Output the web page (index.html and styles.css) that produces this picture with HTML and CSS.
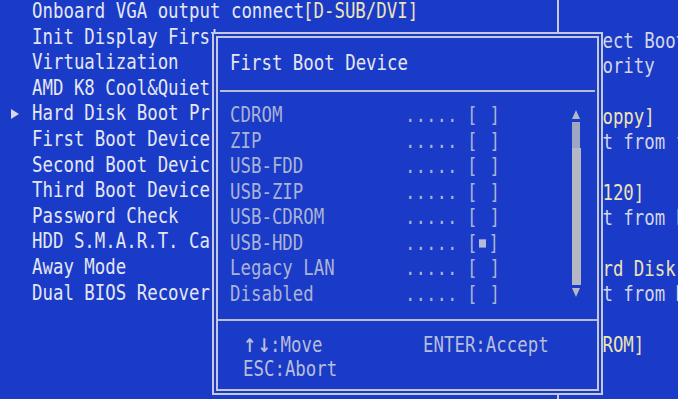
FILE: index.html
```html
<!DOCTYPE html>
<html lang="en">
<head>
<meta charset="utf-8">
<title>BIOS - First Boot Device</title>
<link rel="stylesheet" href="styles.css">
</head>
<body>
<div class="screen">
  <div class="settings">
    <div class="row"><span class="gutter"></span><span class="label">Onboard VGA output connect</span><span class="value hl">[D-SUB/DVI]</span></div>
    <div class="row"><span class="gutter"></span><span class="label">Init Display First</span></div>
    <div class="row"><span class="gutter"></span><span class="label">Virtualization</span></div>
    <div class="row"><span class="gutter"></span><span class="label">AMD K8 Cool&amp;Quiet</span></div>
    <div class="row"><span class="gutter"><span class="marker"></span></span><span class="label">Hard Disk Boot Pr</span></div>
    <div class="row"><span class="gutter"></span><span class="label">First Boot Device</span></div>
    <div class="row"><span class="gutter"></span><span class="label">Second Boot Devic</span></div>
    <div class="row"><span class="gutter"></span><span class="label">Third Boot Device</span></div>
    <div class="row"><span class="gutter"></span><span class="label">Password Check</span></div>
    <div class="row"><span class="gutter"></span><span class="label">HDD S.M.A.R.T. Ca</span></div>
    <div class="row"><span class="gutter"></span><span class="label">Away Mode</span></div>
    <div class="row"><span class="gutter"></span><span class="label">Dual BIOS Recover</span></div>
  </div>
  <div class="help">
    <div class="hrow">Select Boot Device</div>
    <div class="hrow">Priority</div>
    <div class="hrow"></div>
    <div class="hrow hl">[Floppy]</div>
    <div class="hrow">Boot from floppy</div>
    <div class="hrow"></div>
    <div class="hrow hl">[LS120]</div>
    <div class="hrow">Boot from LS120</div>
    <div class="hrow"></div>
    <div class="hrow hl">[Hard Disk]</div>
    <div class="hrow">Boot from HDD</div>
    <div class="hrow"></div>
    <div class="hrow hl">[CDROM]</div>
  </div>

  <div class="dialog">
    <div class="d-title">First Boot Device</div>
    <div class="d-sep"></div>
    <div class="d-body">
      <ul class="d-list">
        <li><span class="name">CDROM</span><span class="dots">.....</span><span class="box">[<span class="mark"></span>]</span></li>
        <li><span class="name">ZIP</span><span class="dots">.....</span><span class="box">[<span class="mark"></span>]</span></li>
        <li><span class="name">USB-FDD</span><span class="dots">.....</span><span class="box">[<span class="mark"></span>]</span></li>
        <li><span class="name">USB-ZIP</span><span class="dots">.....</span><span class="box">[<span class="mark"></span>]</span></li>
        <li><span class="name">USB-CDROM</span><span class="dots">.....</span><span class="box">[<span class="mark"></span>]</span></li>
        <li><span class="name">USB-HDD</span><span class="dots">.....</span><span class="box">[<span class="mark on"></span>]</span></li>
        <li><span class="name">Legacy LAN</span><span class="dots">.....</span><span class="box">[<span class="mark"></span>]</span></li>
        <li><span class="name">Disabled</span><span class="dots">.....</span><span class="box">[<span class="mark"></span>]</span></li>
      </ul>
      <div class="scroll">
        <span class="arrow up"></span>
        <span class="track"></span>
        <span class="thumb"></span>
        <span class="arrow down"></span>
      </div>
    </div>
    <div class="d-sep foot-sep"></div>
    <div class="d-foot">
      <span class="key"><span class="arrows">↑↓</span>:Move</span><span class="key">ENTER:Accept</span>
      <span class="key">ESC:Abort</span><span></span>
    </div>
  </div>
</div>
</body>
</html>
```

FILE: styles.css
```css
html, body {
  margin: 0;
  padding: 0;
}
body {
  width: 678px;
  height: 399px;
  overflow: hidden;
  background: #1a3ac8;
  font-family: "DejaVu Sans Mono", "Liberation Mono", monospace;
  font-size: 17.4px;
  color: #e4e7f2;
}
.screen {
  position: relative;
  width: 678px;
  height: 399px;
  overflow: hidden;
  display: grid;
  grid-template-columns: 557px 1fr;
  background: #1a3ac8;
}
.settings {
  margin-top: -1px;
  padding-left: 10px;
  white-space: nowrap;
  overflow: hidden;
}
.row {
  display: flex;
  height: 25.6px;
  line-height: 25.6px;
}
.label,
.value,
.hrow,
.d-title,
.d-list li,
.key {
  transform: scaleY(1.18);
}
.gutter {
  width: 22px;
  flex: none;
  display: flex;
  align-items: center;
}
.marker {
  width: 0;
  height: 0;
  border-top: 5px solid transparent;
  border-bottom: 5px solid transparent;
  border-left: 8px solid #d4d8e6;
  margin-left: 1px;
}
.label {
  width: 271px;
  flex: none;
  overflow: hidden;
}
.value {
  flex: none;
}
.hl {
  color: #ece3b6;
}
.help {
  border-left: 2px solid #c6cadc;
  padding-top: 28.5px;
  padding-left: 12px;
  white-space: nowrap;
  overflow: hidden;
}
.hrow {
  height: 25.4px;
  line-height: 25.4px;
  color: #d2d6e6;
}
.hrow.hl {
  color: #ece3b6;
}

/* Dialog overlay */
.dialog {
  position: absolute;
  left: 212px;
  top: 32px;
  width: 391px;
  height: 363px;
  box-sizing: border-box;
  border: 6px double #c4c8da;
  background: #1a3ac8;
  display: flex;
  flex-direction: column;
}
.d-title {
  height: 52px;
  line-height: 50px;
  padding-left: 12px;
  color: #e4e7f2;
}
.d-sep {
  height: 2px;
  margin: 0 2px;
  background: #b8bed6;
  flex: none;
}
.d-body {
  display: flex;
  padding-top: 11px;
}
.d-list {
  list-style: none;
  margin: 0;
  padding: 0 0 0 12px;
  flex: 1;
  color: #a9b3d6;
}
.d-list li {
  display: flex;
  height: 25.5px;
  line-height: 25.5px;
  white-space: nowrap;
}
.name {
  width: 175px;
  flex: none;
}
.dots {
  width: 62px;
  flex: none;
}
.box {
  display: flex;
  align-items: center;
}
.mark {
  display: inline-block;
  width: 10px;
  height: 7px;
  margin: 0 1px;
  box-sizing: border-box;
}
.mark.on {
  background: #b4bcd8;
  width: 7px;
  margin: 0 2px 0 2px;
}
.scroll {
  width: 10px;
  margin-right: 16px;
  display: flex;
  flex-direction: column;
  align-items: center;
  padding-top: 7px;
  height: 194px;
  box-sizing: border-box;
}
.arrow {
  width: 0;
  height: 0;
  border-left: 4px solid transparent;
  border-right: 4px solid transparent;
  flex: none;
}
.arrow.up {
  border-bottom: 9px solid #b4b8c6;
}
.arrow.down {
  border-top: 9px solid #b4b8c6;
}
.track {
  width: 8px;
  height: 26px;
  margin-top: 3px;
  flex: none;
  background-image: radial-gradient(circle, #9ea6c2 0.8px, transparent 1px);
  background-size: 2px 2px;
}
.thumb {
  width: 9px;
  flex: 1;
  background: #b4b8c4;
  margin-bottom: 3px;
}
.foot-sep {
  margin-top: 12px;
  margin-left: 0;
  margin-right: 0;
}
.d-foot {
  display: grid;
  grid-template-columns: 180px 1fr;
  grid-auto-rows: 24px;
  line-height: 24px;
  padding: 12px 0 0 25px;
  color: #b6bedc;
  white-space: nowrap;
}
.key {
  display: block;
}
.arrows {
  display: inline-block;
  width: 27px;
  font-family: "DejaVu Sans", sans-serif;
  font-weight: bold;
  font-size: 16px;
  letter-spacing: 1px;
}
```
